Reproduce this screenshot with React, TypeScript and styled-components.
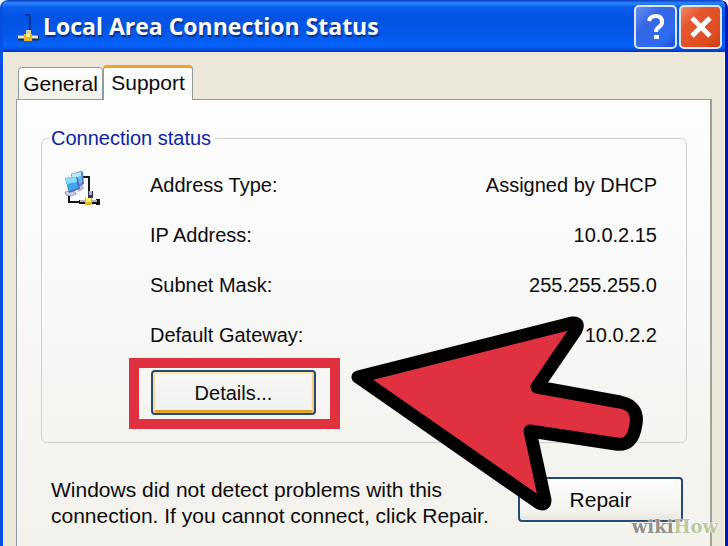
import React from "react";
import styled, { createGlobalStyle, css } from "styled-components";

const GlobalStyle = createGlobalStyle`
  * { box-sizing: border-box; }
  body {
    margin: 0;
    background: #ffffff;
    font-family: "Liberation Sans", Arial, sans-serif;
    font-size: 21px;
    line-height: 26px;
    color: #0c0c0c;
  }
  button { font: inherit; color: inherit; padding: 0; }
`;

const Window = styled.main`
  position: relative;
  display: flex;
  flex-direction: column;
  min-height: 100vh;
  overflow: hidden;
  border: 0 solid #0650e4;
  border-left-width: 3px;
  border-right: 3px solid #0019b8;
  border-radius: 8px 8px 0 0;
  background: #ebe8d9;
`;

const TitleBar = styled.header`
  display: flex;
  align-items: center;
  height: 52px;
  margin: 0 -3px;
  padding: 2px 6px 0 17px;
  gap: 3px;
  background: linear-gradient(
    180deg,
    #0b3cc0 0,
    #2b86fa 3px,
    #0a5fee 7px,
    #0353e2 18px,
    #0458ea 34px,
    #0464fc 46px,
    #0450e0 49px,
    #0433b8 52px
  );
`;

const Title = styled.h1`
  flex: 1;
  margin: 0;
  padding-bottom: 2px;
  font-family: "Open Sans", "Noto Sans", sans-serif;
  font-size: 23px;
  line-height: 32px;
  font-weight: 700;
  color: #ffffff;
  text-shadow: 1px 2px 1px #0a2f8f;
  white-space: nowrap;
`;

const CaptionButton = styled.button<{ $danger?: boolean }>`
  display: grid;
  place-items: center;
  width: 43px;
  height: 44px;
  margin-left: -1px;
  border: 2px solid #dbe6fb;
  border-radius: 5px;
  background: ${(p) =>
    p.$danger
      ? "linear-gradient(135deg, #ee8a68 0, #e5562f 30%, #e04c22 75%, #c63d12 100%)"
      : "linear-gradient(135deg, #6590f0 0, #3567e4 35%, #2f6cf2 75%, #1b4fd0 100%)"};
`;

const Body = styled.div`
  flex: 1;
  display: flex;
  flex-direction: column;
  padding: 13px 12px 0;
  border: solid #f7f5ec;
  border-width: 0 1px;
`;

const TabList = styled.div`
  display: flex;
  align-items: flex-end;
  height: 35px;
  margin-bottom: -1px;
  padding-left: 2px;
`;

const Tab = styled.button<{ $active?: boolean }>`
  width: 85px;
  height: 33px;
  border: 1px solid #919b9c;
  border-radius: 4px 4px 0 0;
  background: linear-gradient(180deg, #ffffff, #f1f0ea);
  ${(p) =>
    p.$active &&
    css`
      position: relative;
      width: 90px;
      height: 35px;
      border-top: 3px solid #f0a030;
      border-bottom: 0;
      padding-bottom: 2px;
      background: #fdfdfe;
    `}
`;

const Panel = styled.section`
  flex: 1;
  padding: 25px 23px 15px 24px;
  border: 1px solid #919b9c;
  border-right: 2px solid #a09f98;
  border-bottom: 0;
  background: linear-gradient(180deg, #fdfdfe 0, #f9f9f9 40%, #f4f3ef 80%, #f3f2ed 100%);
`;

const Group = styled.fieldset`
  min-width: 0;
  margin: 0;
  padding: 9px 29px 13px 22px;
  border: 1px solid #cfcfca;
  border-radius: 6px;
  font-size: 20px;
`;

const Legend = styled.legend`
  margin-left: -15px;
  padding: 0 4px 0 2px;
  color: #0a24a8;
`;

const Details = styled.div`
  display: flex;
  gap: 48px;
`;

const IconCell = styled.div`
  flex: none;
  width: 38px;
  padding-top: 10px;
`;

const Facts = styled.dl`
  flex: 1;
  margin: 0;
`;

const Fact = styled.div`
  display: flex;
  justify-content: space-between;
  align-items: center;
  height: 50px;
  dd { margin: 0; }
`;

const Highlight = styled.div`
  position: relative;
  width: 211px;
  margin: -2px 0 0 65px;
  padding: 2px 14px 4px 12px;
  border: 10px solid #e03140;
`;

const PushButton = styled.button<{ $focused?: boolean }>`
  display: block;
  width: 165px;
  height: 45px;
  border: 2px solid #264b73;
  border-radius: 4px;
  background: linear-gradient(180deg, #fdfdfc, #f3f2ee 80%, #e6e4dc);
  ${(p) =>
    p.$focused &&
    css`
      background: linear-gradient(180deg, #f7f7f5, #f0f0ee);
      box-shadow: inset 0 2px 1px #fbe6a8, inset 2px 0 1px #f8dc98,
        inset -2px 0 1px #f3c872, inset 0 -3px 0 #dfa026;
    `}
`;

const Pointer = styled.svg`
  position: absolute;
  z-index: 2;
  left: 201px;
  top: -68px;
  width: 320px;
  height: 246px;
  pointer-events: none;
`;

const Footer = styled.footer`
  display: flex;
  justify-content: space-between;
  align-items: flex-start;
  margin-top: 34px;
  padding: 0 4px 0 10px;
  p { margin: 0; }
`;

const Watermark = styled.div`
  position: absolute;
  z-index: 3;
  right: 7px;
  bottom: 8px;
  font-family: "DejaVu Serif", serif;
  font-size: 18px;
  line-height: 22px;
  font-weight: 700;
  color: #8f908c;
  text-shadow: 0 0 2px #ffffff, 0 0 2px #ffffff;
  span { color: #bac8a2; }
`;

const Plug = () => (
  <svg width="23" height="31" viewBox="0 0 23 31" aria-hidden="true">
    <path d="M8 3h3q2 0 2 3v12" fill="none" stroke="#09318f" strokeWidth="2" />
    <path d="M1 26h21" stroke="#1b2a50" strokeWidth="5" />
    <path d="M1 25h20" stroke="#e5e5d0" strokeWidth="3" />
    <path d="M9 18h5v5H9z" fill="#d5d2b0" />
    <path d="M7 22h8v7H7z" fill="#e9b72c" />
    <path d="M9 22h4v3H9z" fill="#fff08a" />
  </svg>
);

const NetworkIcon = () => (
  <svg width="38" height="38" viewBox="0 0 38 38" role="img" aria-label="Network connection">
    <path d="M19 7h6v16M5 25v7h11" fill="none" stroke="#15151a" strokeWidth="2" />
    <path d="m12 16 7-1 1 4-6 3z" fill="#b7bde2" />
    <path d="m7 4 10-3 2 1 1 12-6 3-5-3z" fill="#5f78c4" />
    <path d="m8 4 9-2 1 11-7 2z" fill="#63bdf0" />
    <path d="m8 4 9-2v4L8 8z" fill="#b3e8fd" />
    <path d="m6 21 5 1 1 2-5 2-5-1-1-3z" fill="#d0cfe6" stroke="#9299c4" />
    <path d="m1 8 11-1 2 1 2 11-11 4z" fill="#4f69be" />
    <path d="m1 8 11-1 2 11-9 3z" fill="#3fa8ec" />
    <path d="m1 8 11-1 1 5-10 2z" fill="#8bd9fb" />
    <path d="M24 21h5v7h-5z" fill="#36335b" />
    <path d="M25 21h3v4h-3z" fill="#aaa9cc" />
    <path d="M15 32h20M34 29v6" stroke="#15151a" strokeWidth="4" />
    <path d="M16 31h17" stroke="#b3b4b4" strokeWidth="2" />
    <path d="M21 28h7v7h-7z" fill="#e9b41d" />
    <path d="M22 28h5v4h-5z" fill="#fff269" />
  </svg>
);

const facts = [
  ["Address Type:", "Assigned by DHCP"],
  ["IP Address:", "10.0.2.15"],
  ["Subnet Mask:", "255.255.255.0"],
  ["Default Gateway:", "10.0.2.2"],
];

export default function App() {
  return (
    <>
      <GlobalStyle />
      <Window>
        <TitleBar>
          <Plug />
          <Title>Local Area Connection Status</Title>
          <CaptionButton aria-label="Help">
            <svg width="20" height="28" viewBox="0 0 20 28">
              <path
                d="M3 8Q4 3 10 3q6 0 6 6 0 3-3 5-3 2-3 5"
                fill="none"
                stroke="#fff"
                strokeWidth="4"
              />
              <path d="M8 22h5v4H8z" fill="#fff" />
            </svg>
          </CaptionButton>
          <CaptionButton $danger aria-label="Close">
            <svg width="26" height="26" viewBox="0 0 26 26">
              <path d="m4 4 18 18M22 4 4 22" stroke="#fff" strokeWidth="5" />
            </svg>
          </CaptionButton>
        </TitleBar>
        <Body>
          <TabList role="tablist">
            <Tab role="tab" aria-selected="false">General</Tab>
            <Tab role="tab" aria-selected="true" $active>Support</Tab>
          </TabList>
          <Panel role="tabpanel" aria-label="Support">
            <Group>
              <Legend>Connection status</Legend>
              <Details>
                <IconCell><NetworkIcon /></IconCell>
                <Facts>
                  {facts.map(([label, value]) => (
                    <Fact key={label}>
                      <dt>{label}</dt>
                      <dd>{value}</dd>
                    </Fact>
                  ))}
                </Facts>
              </Details>
              <Highlight>
                <PushButton $focused>Details...</PushButton>
                <Pointer viewBox="0 0 320 246" aria-hidden="true">
                  <path
                    d="M18 77 232 23q8-1 4 7l-39 57 83 15q19 4 16 22-3 23-20 20l-86-13 15 69q0 6-6 3Z"
                    fill="#e03140"
                    stroke="#000"
                    strokeWidth="13"
                    strokeLinejoin="round"
                  />
                </Pointer>
              </Highlight>
            </Group>
            <Footer>
              <p>
                Windows did not detect problems with this
                <br />
                connection. If you cannot connect, click Repair.
              </p>
              <PushButton>Repair</PushButton>
            </Footer>
          </Panel>
        </Body>
        <Watermark>wiki<span>How</span></Watermark>
      </Window>
    </>
  );
}
